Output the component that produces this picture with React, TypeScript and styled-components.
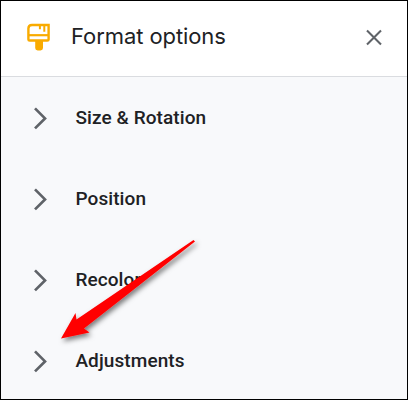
import React from "react";
import styled, { createGlobalStyle } from "styled-components";

const GlobalStyle = createGlobalStyle`
  * { box-sizing: border-box; }
  body { margin: 0; }
`;

const Panel = styled.section`
  position: relative;
  display: flex;
  flex-direction: column;
  width: 408px;
  height: 400px;
  overflow: hidden;
  border: 1px solid #000;
  background: #f8f9fb;
  color: #202124;
`;

const Header = styled.header`
  display: flex;
  align-items: center;
  height: 76px;
  flex: none;
  padding: 0 21px 3px 25px;
  border-bottom: 1px solid #dadce0;
  background: #fff;
`;

const Title = styled.h1`
  flex: 1;
  margin: 0 0 2px 19px;
  font: 400 22px/28px Inter, sans-serif;
  letter-spacing: -0.08px;
  white-space: nowrap;
`;

const CloseButton = styled.button`
  display: flex;
  width: 24px;
  height: 24px;
  padding: 0;
  border: 0;
  background: none;
  margin-top: 2px;
`;

const Sections = styled.div`
  display: grid;
  grid-auto-rows: 81px;
`;

const SectionRow = styled.div`
  display: flex;
  align-items: center;
  padding: 0 0 0 27px;
`;

const Label = styled.span`
  margin: 0 0 0 21.4px;
  font: 500 19px/24px Roboto, sans-serif;
  letter-spacing: 0.1px;
  white-space: nowrap;
`;

const Pointer = styled.svg`
  position: absolute;
  left: -1px;
  top: -1px;
  pointer-events: none;
`;

const Brush = () => (
  <svg width="26" height="28" viewBox="0 0 26 28" fill="none">
    <path
      d="M6 2H22.6V16.4Q22.6 17.5 21.3 17.5H3.7Q2.4 17.5 2.4 16.4V5.5Q2.4 2 6 2Z"
      stroke="#f9ab00"
      strokeWidth="2.4"
    />
    <path d="M2 12.2H23" stroke="#f9ab00" strokeWidth="2.2" />
    <path d="M13.9 2V6.2M18.3 2V8.8" stroke="#f9ab00" strokeWidth="2" />
    <path d="M9.2 17.5H17V25Q17 27.4 14.5 27.4H11.7Q9.2 27.4 9.2 25Z" fill="#f9ab00" />
  </svg>
);

const Chevron = () => (
  <svg width="26" height="26" viewBox="0 0 26 26" fill="none">
    <path d="M7 3.4L17 13.4L7 23.4" stroke="#5f6368" strokeWidth="2.7" />
  </svg>
);

const sections = ["Size & Rotation", "Position", "Recolor", "Adjustments"];

export default function App() {
  return (
    <>
      <GlobalStyle />
      <Panel>
        <Header>
          <Brush />
          <Title>Format options</Title>
          <CloseButton aria-label="Close">
            <svg width="24" height="24" viewBox="0 0 24 24" fill="none">
              <path d="M5 4.6L19 18.6M19 4.6L5 18.6" stroke="#5f6368" strokeWidth="2.1" />
            </svg>
          </CloseButton>
        </Header>
        <Sections>
          {sections.map((name) => (
            <SectionRow key={name}>
              <Chevron />
              <Label>{name}</Label>
            </SectionRow>
          ))}
        </Sections>
        <Pointer width="408" height="400" viewBox="0 0 408 400">
          <defs>
            <filter id="arrow-shadow" x="-20%" y="-20%" width="140%" height="140%">
              <feDropShadow dx="2" dy="3" stdDeviation="2.5" floodColor="#000" floodOpacity="0.5" />
            </filter>
          </defs>
          <path
            d="M61 338.5L75.5 313L76.5 319.5L193.5 240L195 241.5L84 328.5L89.5 332.5Z"
            fill="#f00"
            filter="url(#arrow-shadow)"
          />
        </Pointer>
      </Panel>
    </>
  );
}
